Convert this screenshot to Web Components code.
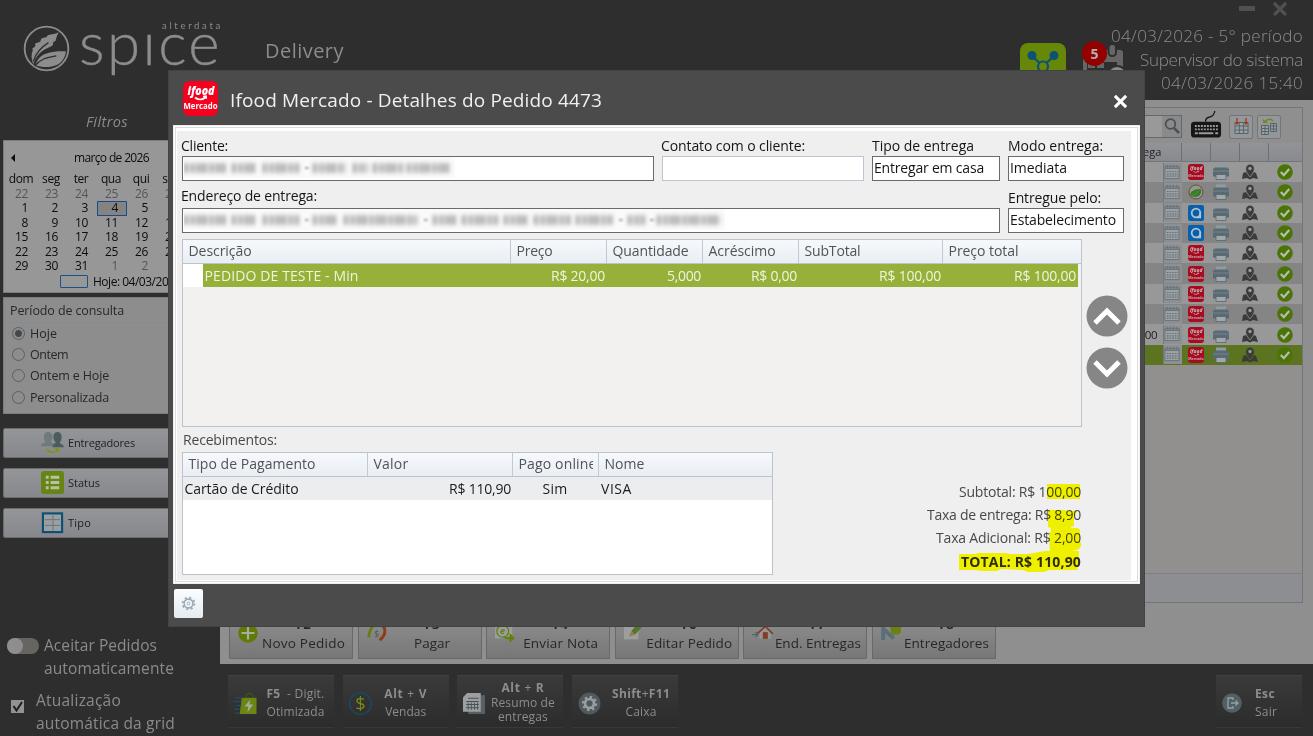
<!DOCTYPE html>
<html lang="pt-BR">
<head>
<meta charset="utf-8">
<title>Spice Delivery</title>
<style>
    html, body{
        margin: 0;
        padding: 0;
        height: 100%;
        overflow: hidden;
        background: #2e2e2e;
        font-family: "Open Sans", "Noto Sans", sans-serif;
    }
</style>
</head>
<body>
<spice-app></spice-app>

<script>
const ICONS = {
    leaf: `<svg viewBox="0 0 48 48"><circle cx="24" cy="24" r="22.3" fill="none" stroke="#8c8c8c" stroke-width="1.9"/>
        <path fill="#8c8c8c" d="M10.500 40C8.500 35 8 30 10 26l-.5-2 3-2 0-3 5-2 1.500-3.500 4.500-1 2-2c4-1 7-1 11-3-2.500 4-2.500 7-3.500 9l-2 .5-.5 3.500c-2 2-4 2.500-6.500 3.500C18 27 13 32 10.500 40z"/>
        <path fill="none" stroke="#2e2e2e" stroke-width="1.300" d="M10.500 37C13 29 18 23 26 18"/>
        <path fill="#8c8c8c" d="M12.500 41c2-7 7-11 13-12.500 6-1.500 12-2 18.500-1.500-1 6-4 11-9 13.500-7 3-15 3-22.500.5z"/>
        <path fill="none" stroke="#2e2e2e" stroke-width="1.300" d="M12 42c5-7 12-9 22-10.500"/></svg>`,
    ifood: `<svg viewBox="0 0 35 35"><rect width="35" height="35" rx="6.5" fill="var(--red, #f5001f)"/>
        <g fill="var(--ink, #fff)" font-family="Open Sans" text-anchor="middle">
        <text x="18" y="13.5" font-size="12.5" font-weight="800" font-style="italic" textLength="27" lengthAdjust="spacingAndGlyphs">ifood</text>
        <text x="17.5" y="28" font-size="8.5" font-weight="700" textLength="34" lengthAdjust="spacingAndGlyphs">Mercado</text></g>
        <path d="M12 16.5q5 4 10.500 0M20 15.500l3-.3.4 2.500" fill="none" stroke="var(--ink, #fff)" stroke-width="1.700"/></svg>`,
    share: `<svg viewBox="0 0 46 46"><rect width="46" height="46" rx="8" fill="#678708"/>
        <g stroke="#0d5273" stroke-width="2.200" fill="none"><path d="M12 13l11 10 11-10M23 23v12"/><circle cx="23" cy="23.500" r="5" fill="#678708"/></g>
        <circle cx="12" cy="12.500" r="4.500" fill="#0d5273"/><circle cx="34" cy="12.500" r="4.500" fill="#0d5273"/></svg>`,
    agenda: `<svg viewBox="0 0 42 42"><rect x="0" y="7" width="40" height="35" rx="3" fill="#666"/>
        <rect x="25.500" y="1" width="7.500" height="12" rx="3.500" fill="#666" stroke="#2e2e2e" stroke-width="2"/>
        <path fill="#2e2e2e" d="M4 19h30v22H4z"/><path fill="#666" d="M5 20h7v5H5zM14 20h7v5h-7z"/>
        <circle cx="34" cy="33" r="10" fill="#8a8a8a" stroke="#2e2e2e" stroke-width="2"/></svg>`,
    users: `<svg viewBox="0 0 24 24"><path fill="#6f7a7d" d="M7 1c3 0 5 2 5 5s-1 4-2 5c1 2 4 2 5 5H0c0-3 3-3 5-5-2-1-2-3-2-5s1-5 4-5z"/>
        <path fill="#4c5b60" d="M17 1c3 0 4.500 2 4.500 5s-1 5-2 6c1 2 4 2 4.500 5H12c0-3 2-4 3.500-5-2-2-2.500-4-2.500-6s1-5 4-5z"/>
        <path d="M6 19c3 4 8 4 11 1" fill="none" stroke="#7d9410" stroke-width="1.500"/><path fill="#7d9410" d="M14 18h5l-1 5z"/></svg>`,
    status: `<svg viewBox="0 0 24 24"><rect width="24" height="24" rx="3" fill="#678514"/><g fill="#b9c2a0"><path d="M5 5h3v3H5zM5 10.500h3v3H5zM5 16h3v3H5zM10 5h9v3h-9zM10 10.500h9v3h-9zM10 16h9v3h-9z"/></g></svg>`,
    tipo: `<svg viewBox="0 0 24 24"><rect x="2" y="2.500" width="20" height="19.500" fill="#9a9fa1" stroke="#0c4f73" stroke-width="2.200"/><path d="M4 9h16M4 15h16M12.500 4v17" stroke="#6c7377" stroke-width="1"/></svg>`,
    search: `<svg viewBox="0 0 18 18"><circle cx="7.500" cy="7" r="4.800" fill="none" stroke="#4a5053" stroke-width="1.800"/><path d="M11 11l5 5" stroke="#4a5053" stroke-width="2.500"/></svg>`,
    keyboard: `<svg viewBox="0 0 32 32"><rect y="12" width="31" height="16.500" rx="3.500" fill="#161616"/>
        <path d="M15 12c0-5 3-4 5-5 3-1 4-2 4.500-6" fill="none" stroke="#161616" stroke-width="1.400"/>
        <path d="M4 16.500h24M4 20h24" stroke="#999" stroke-width="2" stroke-dasharray="2 1.100"/><path d="M4 24h3M8 24h15M25 24h3" stroke="#999" stroke-width="2"/></svg>`,
    gridRed: `<svg viewBox="0 0 18 18"><rect x="3" y="4" width="13" height="12" fill="#9a9fa1"/><path d="M3 4.500h13v11H3zM3 8h13M3 12h13M7.300 4v12M11.600 4v12" stroke="#56656c" fill="none"/><path d="M5 0v5M14 0v5" stroke="#a03818" stroke-width="1.300"/><path fill="#a03818" d="M2.500 4h5L5 7zM11.500 4h5L14 7z"/></svg>`,
    gridGreen: `<svg viewBox="0 0 18 18"><path d="M1.500 7.500h7v9h-7zM1.500 10.500h7M1.500 13.500h7M5 7v9M10.500 5.500h6v8h-6zM10.500 8h6M10.500 11h6M13.500 5v8" stroke="#56656c" fill="#9a9fa1"/><path d="M5 4c3-4 6-3 8-1" stroke="#6c8c10" stroke-width="1.600" fill="none"/><path fill="#6c8c10" d="M3 1l5 4H3z"/></svg>`,
    calendar: `<svg viewBox="0 0 18 18"><path d="M1 3.500h15v13H1z" fill="#9ca1a3" stroke="#66727a"/><path d="M1 5.500h15" stroke="#66727a" stroke-width="1.500"/><path d="M3.500 2v3M6.500 2v3M10 2v3M13.500 2v3" stroke="#66727a"/><path d="M3 9h12M3 11.500h12M3 14h12" stroke="#66727a" stroke-width="1.300" stroke-dasharray="1.800 1"/></svg>`,
    leafRound: `<svg viewBox="0 0 16 16"><circle cx="8" cy="8" r="7" fill="#96998f" stroke="#67502e" stroke-width="1"/><path d="M2 11C3 6 8 5 13 5c1 5-2 8-6 8-2 0-3-1-5-2z" fill="#3d792c"/><path d="M3.500 11.500q5-1 8-5" stroke="#5b8f48" fill="none" stroke-width=".8"/></svg>`,
    aiq: `<svg viewBox="0 0 16 16"><rect width="16" height="16" rx="2" fill="#075fae"/><circle cx="8" cy="8" r="4.300" fill="none" stroke="#b5c2cb" stroke-width="1.700"/><path d="M12.300 7v5.500H9" stroke="#b5c2cb" stroke-width="1.600" fill="none"/></svg>`,
    printer: `<svg viewBox="0 0 16 16"><path d="M3 .5h10V5H3z" fill="#8e9ba1"/><path d="M0 4.500h1.500v-1h13v1H16v8H0z" fill="#596a72"/><path d="M0 7h16" stroke="#75838a"/><path d="M3 10.500h10v5H3z" fill="#a0a8ab" stroke="#55666e" stroke-width=".8"/></svg>`,
    pin: `<svg viewBox="0 0 16 16"><path fill="#3b3b3b" d="M1 9l3-1 4 5 4-5 2 1 2 6-5-1-3 1.500L5 14l-5 1z"/><path fill="#3b3b3b" stroke="var(--halo, #999)" stroke-width=".6" d="M8 13C4 8 3.800 6.500 3.800 4.500a4.200 4.200 0 018.400 0C12.200 6.500 12 8 8 13z"/><circle cx="8" cy="4.500" r="1.700" fill="#999"/></svg>`,
    check: `<svg viewBox="0 0 16 16"><circle cx="8" cy="8" r="7.800" fill="#4b7407"/><path d="M3.800 8l3 3.200L12.200 5" fill="none" stroke="#b9bcb2" stroke-width="2.200"/></svg>`,
    plus: `<svg viewBox="0 0 20 20"><circle cx="10" cy="10" r="9.700" fill="#5f7a06"/><path d="M10 3.500v13M3.500 10h13" stroke="#a9ae9c" stroke-width="2.200"/></svg>`,
    pay: `<svg viewBox="0 0 22 22"><path d="M2 16C2 9 4 4 10 1" fill="none" stroke="#657f0e" stroke-width="3"/><path d="M14 1c7 3 8 11 0 18" fill="none" stroke="#8e3c18" stroke-width="3.200"/><text x="8" y="15" font-size="10" fill="#555">$</text></svg>`,
    note: `<svg viewBox="0 0 22 22"><path fill="#999d9e" d="M0 0h19v17H0z"/><text x="5.500" y="12.500" font-size="10" font-style="italic" font-weight="700" fill="#657f0e">e</text><circle cx="8.500" cy="9" r="6.500" fill="none" stroke="#657f0e" stroke-width="1.300"/><path fill="#657f0e" d="M9 15h7v-4l6 5.500-6 5.500v-4c-3 0-5 0-7-3z"/></svg>`,
    edit: `<svg viewBox="0 0 22 22"><path fill="#9ba09f" d="M0 1h16v17H0z"/><path fill="#53772c" d="M8 9l9-11 5 4-10 11z"/><path fill="#9b784d" d="M8 9l4 4-7 2z"/></svg>`,
    house: `<svg viewBox="0 0 24 20"><path fill="#90979a" d="M9 8l7-6 7 6v9H9z"/><path d="M6 11l10-9 9 9" stroke="#853c25" stroke-width="2" fill="none"/><path fill="#853c25" d="M13 9h6v8h-6z"/><path d="M0 12h6M4 9l3 3-3 3" stroke="#54636a" stroke-width="1.500" fill="none"/></svg>`,
    drivers: `<svg viewBox="0 0 23 20"><path d="M2.500 18V5l12 11" fill="none" stroke="#596e76" stroke-width="4.500"/><rect x="11" y="-4" width="12" height="16" rx="5" fill="#6b8210"/></svg>`,
    bag: `<svg viewBox="0 0 24 24"><path fill="#6d8512" d="M8 6h15.500v17H6z"/><path d="M12 6c0-6 8-6 8 0" stroke="#41521a" stroke-width="1.500" fill="none"/><path fill="#a7aea0" d="M17 8l-6 7h4l-1 6 6-8h-4z"/><path d="M1 6h8M0 10h8M2 14h6M0 18h6M1 22h5" stroke="#1c5574" stroke-width="1"/></svg>`,
    coin: `<svg viewBox="0 0 24 24"><circle cx="12" cy="12" r="11.300" fill="none" stroke="#174d65" stroke-width="1.300"/><text x="12" y="18.500" text-anchor="middle" font-size="19" fill="#788f10">$</text></svg>`,
    report: `<svg viewBox="0 0 22 22"><path fill="#586066" d="M5 3h16v18H5z"/><path fill="#9b9f9f" d="M4 1h13v18H0V5z"/><path d="M5 6h10M3 9h12M3 12h12M3 15h12" stroke="#485055"/><path d="M5 10v7M8 10v7M11 10v7M14 10v7" stroke="#485055" stroke-width=".8"/></svg>`,
    cog: `<svg viewBox="0 0 22 22"><circle cx="11" cy="11" r="10.500" fill="#50595e"/><circle cx="11" cy="11" r="4.300" fill="none" stroke="#9b9f9f" stroke-width="2.600"/><circle cx="11" cy="11" r="6.300" fill="none" stroke="#9b9f9f" stroke-width="2" stroke-dasharray="2.300 2.650"/></svg>`,
    exit: `<svg viewBox="0 0 20 20"><circle cx="10" cy="10" r="9.800" fill="#506066"/><path d="M11 7V5H6v10h5v-2M9 10h7M13.500 7.500L16 10l-2.500 2.500" fill="none" stroke="#9b9f9f" stroke-width="1.300"/></svg>`,
    gear: `<svg viewBox="0 0 16 16"><circle cx="8" cy="8" r="4.700" fill="none" stroke="#9aabb4" stroke-width="1.700"/><circle cx="8" cy="8" r="6.300" fill="none" stroke="#9aabb4" stroke-width="2" stroke-dasharray="2.200 2.750"/><circle cx="8" cy="8" r="1.400" fill="none" stroke="#9aabb4"/></svg>`,
    up: `<svg viewBox="0 0 42 42"><circle cx="21" cy="21" r="20.500" fill="#868686"/><path d="M9 28l12-12 12 12" fill="none" stroke="#fff" stroke-width="5"/></svg>`,
    down: `<svg viewBox="0 0 42 42"><circle cx="21" cy="21" r="20.500" fill="#868686"/><path d="M9 15l12 12 12-12" fill="none" stroke="#fff" stroke-width="5"/></svg>`,
    cross: `<svg viewBox="0 0 16 16"><path d="M2 2l12 12M14 2L2 14" stroke="currentColor" stroke-width="3.200"/></svg>`
};

class AppIcon extends HTMLElement{
    constructor(){
        super();
        this.attachShadow({mode : "open"});
    }
    connectedCallback(){
        this.shadowRoot.innerHTML = `
            <style>
                :host{
                    display: block;
                    flex: none;
                    width: ${this.getAttribute("size")}px;
                    height: ${this.getAttribute("size")}px;
                }
                svg{
                    display: block;
                    width: 100%;
                    height: 100%;
                    overflow: visible;
                }
            </style>
            ${ICONS[this.getAttribute("name")]}
        `;
    }
}
customElements.define("app-icon", AppIcon);

// One line of text, tracked so that it takes exactly the width in the "w" attribute
class UiText extends HTMLElement{
    constructor(){
        super();
        this.attachShadow({mode : "open"});
        this.shadowRoot.innerHTML = `
            <style>
                :host{
                    display: block;
                    flex: none;
                }
                span{
                    display: block;
                    width: max-content;
                    white-space: pre;
                }
            </style>
            <span><slot></slot></span>
        `;
    }
    connectedCallback(){
        const w = parseFloat(this.getAttribute("w"));
        if(!w) return;
        const span = this.shadowRoot.querySelector("span");
        const gap = (w - span.getBoundingClientRect().width) / this.textContent.length;
        span.style.letterSpacing = gap + "px";
    }
}
customElements.define("ui-text", UiText);

class BrandHeader extends HTMLElement{
    constructor(){
        super();
        this.attachShadow({mode : "open"});
        this.shadowRoot.innerHTML = `
            <style>
                :host{
                    display: flex;
                    height: 100px;
                    box-sizing: border-box;
                    color: #8c8c8c;
                }
                .logo{
                    display: flex;
                    padding: 25px 0 0 23px;
                    gap: 11px;
                }
                .name{
                    margin-top: -4px;
                    width: 140px;
                }
                .maker{
                    font: 9.500px/10px "Lato", sans-serif;
                    padding-left: 81px;
                }
                /* the wordmark has no dot on the i, the top edge cuts it */
                .word{
                    font: 300 60px/74px "Lato", sans-serif;
                    height: 46px;
                    overflow: hidden;
                    margin-top: 1px;
                    -webkit-text-stroke: .4px #8c8c8c;
                }
                .word ui-text{
                    margin-top: -27px;
                    margin-left: -2px;
                }
                .page{
                    font-size: 20px;
                    line-height: 26px;
                    margin: 38px 0 0 44px;
                }
                .right{
                    margin-left: auto;
                    display: flex;
                }
                .share{
                    margin-top: 43px;
                }
                .agenda{
                    margin: 43px 0 0 17px;
                    position: relative;
                }
                .badge{
                    position: absolute;
                    left: -1px;
                    top: -2px;
                    width: 25px;
                    height: 25px;
                    border-radius: 50%;
                    background: #930000;
                    color: #b9b0b0;
                    font: bold 14px/25px "Open Sans", sans-serif;
                    text-align: center;
                }
                .session{
                    width: 194px;
                    margin: 1px 10px 0 -16px;
                    display: flex;
                    flex-direction: column;
                    align-items: flex-end;
                    font: 300 17px/23.500px "Open Sans", sans-serif;
                    white-space: nowrap;
                }
                .window{
                    display: flex;
                    align-items: center;
                    gap: 17px;
                    height: 15px;
                    margin: 0 15px 8px 0;
                    color: #505050;
                }
                .min{
                    width: 16px;
                    height: 5px;
                    background: #505050;
                }
            </style>
            <div class="logo">
                <app-icon name="leaf" size="47"></app-icon>
                <div class="name">
                    <div class="maker"><ui-text w="61">alterdata</ui-text></div>
                    <div class="word"><ui-text w="143">spice</ui-text></div>
                </div>
            </div>
            <div class="page"><ui-text w="79">Delivery</ui-text></div>
            <div class="right">
                <app-icon class="share" name="share" size="46"></app-icon>
                <div class="agenda"><app-icon name="agenda" size="42"></app-icon><div class="badge">5</div></div>
                <div class="session">
                    <div class="window"><div class="min"></div><app-icon name="cross" size="16"></app-icon></div>
                    <ui-text w="192">04/03/2026 - 5° período</ui-text>
                    <ui-text w="163">Supervisor do sistema</ui-text>
                    <ui-text w="142">04/03/2026 15:40</ui-text>
                </div>
            </div>
        `;
    }
}
customElements.define("brand-header", BrandHeader);

class MonthCalendar extends HTMLElement{
    constructor(){
        super();
        this.attachShadow({mode : "open"});
        const days = [22,23,24,25,26,27, 1,2,3,4,5,6, 8,9,10,11,12,13, 15,16,17,18,19,20, 22,23,24,25,26,27, 29,30,31,1,2,3];
        const cells = days.map((d, i) => {
            const other = i < 6 || i > 32;
            return `<span class="${other ? "other" : ""} ${i == 9 ? "today" : ""}">${d}</span>`;
        }).join("");
        this.shadowRoot.innerHTML = `
            <style>
                :host{
                    display: block;
                    flex: none;
                    height: 153px;
                    box-sizing: border-box;
                    background: #979797;
                    border: 1px solid #7c7c7c;
                    color: #0c0c0c;
                    font-size: 12px;
                    overflow: hidden;
                }
                .top{
                    display: flex;
                    align-items: center;
                    height: 32px;
                    padding: 1px 0 0 7px;
                    box-sizing: border-box;
                }
                .arrow{
                    border: 4px solid transparent;
                    border-right-color: #0c0c0c;
                    border-left: 0;
                    margin-right: 59px;
                }
                .days{
                    display: grid;
                    grid-template-columns: repeat(6, 30px);
                    padding-left: 3px;
                    letter-spacing: -.4px;
                }
                .names{
                    line-height: 11px;
                    height: 14px;
                    text-align: center;
                    margin-left: -1px;
                }
                .nums{
                    line-height: 14.450px;
                    text-align: right;
                }
                .nums span{
                    padding-right: 9px;
                    height: 14.450px;
                }
                .other{
                    color: #555;
                }
                .nums .today{
                    background: #848484;
                    box-shadow: inset 0 0 0 1px #174d80;
                    border-radius: 1px;
                }
                .foot{
                    display: flex;
                    align-items: center;
                    gap: 5px;
                    padding-left: 56px;
                    height: 16px;
                }
                .box{
                    width: 26px;
                    height: 11px;
                    border: 1px solid #1b5286;
                    border-radius: 1px;
                }
            </style>
            <div class="top"><div class="arrow"></div><ui-text w="75">março de 2026</ui-text></div>
            <div class="days names"><span>dom</span><span>seg</span><span>ter</span><span>qua</span><span>qui</span><span>sex</span></div>
            <div class="days nums">${cells}</div>
            <div class="foot"><div class="box"></div><ui-text w="88">Hoje: 04/03/2026</ui-text></div>
        `;
    }
}
customElements.define("month-calendar", MonthCalendar);

class PeriodFilter extends HTMLElement{
    constructor(){
        super();
        this.attachShadow({mode : "open"});
        this.shadowRoot.innerHTML = `
            <style>
                :host{
                    display: block;
                    flex: none;
                    height: 117px;
                    box-sizing: border-box;
                    background: #8d8d8d;
                    border: 1px solid #7c7c7c;
                    color: #282828;
                    font-size: 12.500px;
                }
                .title{
                    line-height: 25px;
                    height: 24px;
                    padding-left: 6px;
                    border-bottom: 1px solid #868c8c;
                }
                label{
                    display: flex;
                    align-items: center;
                    height: 21.200px;
                    padding-left: 8px;
                    gap: 5px;
                }
                i{
                    width: 11px;
                    height: 11px;
                    border: 1px solid #595e66;
                    border-radius: 50%;
                }
                .on{
                    background: radial-gradient(#44484d 3px, transparent 4px);
                }
            </style>
            <div class="title"><ui-text w="114">Período de consulta</ui-text></div>
            <label><i class="on"></i><ui-text w="27">Hoje</ui-text></label>
            <label><i></i><ui-text w="38">Ontem</ui-text></label>
            <label><i></i><ui-text w="79">Ontem e Hoje</ui-text></label>
            <label><i></i><ui-text w="79">Personalizada</ui-text></label>
        `;
    }
}
customElements.define("period-filter", PeriodFilter);

class SideButton extends HTMLElement{
    constructor(){
        super();
        this.attachShadow({mode : "open"});
        this.shadowRoot.innerHTML = `
            <style>
                :host{
                    display: flex;
                    align-items: center;
                    gap: 4px;
                    height: 30px;
                    box-sizing: border-box;
                    padding: 0 0 2px 37px;
                    background: linear-gradient(#939598, #85878a);
                    border: 1px solid #6d6d6d;
                    border-radius: 2px;
                    color: #1e1e1e;
                    font-size: 11px;
                }
            </style>
            <app-icon name="${this.getAttribute("icon")}" size="23"></app-icon>
            <slot></slot>
        `;
    }
}
customElements.define("side-button", SideButton);

class FilterSidebar extends HTMLElement{
    constructor(){
        super();
        this.attachShadow({mode : "open"});
        this.shadowRoot.innerHTML = `
            <style>
                :host{
                    display: flex;
                    flex-direction: column;
                    box-sizing: border-box;
                    padding: 0 0 0 3px;
                    width: 220px;
                    flex: none;
                }
                .title{
                    height: 40px;
                    padding: 11px 0 0 83px;
                    box-sizing: border-box;
                    font: italic 14.500px/21px "Open Sans", sans-serif;
                    color: #8c8c8c;
                }
                month-calendar, period-filter, .buttons{
                    width: 180px;
                }
                period-filter{
                    margin-top: 4px;
                }
                .buttons{
                    display: flex;
                    flex-direction: column;
                    gap: 10px;
                    margin-top: 14px;
                }
                .opt{
                    display: flex;
                    color: #8b8b8b;
                    font-size: 15.500px;
                    line-height: 22.500px;
                }
                .accept{
                    margin-top: 96px;
                    padding-left: 4px;
                    gap: 5px;
                }
                .switch{
                    width: 32px;
                    height: 16px;
                    border-radius: 8px;
                    background: #676562;
                    margin-top: 4px;
                }
                .knob{
                    width: 16px;
                    height: 16px;
                    border-radius: 50%;
                    background: #8e8e8e;
                }
                .auto{
                    margin-top: 10px;
                    padding-left: 8px;
                    gap: 12px;
                }
                .box{
                    width: 13px;
                    height: 13px;
                    margin-top: 11px;
                    background: #929292;
                }
                .box svg{
                    display: block;
                }
            </style>
            <div class="title"><ui-text w="42">Filtros</ui-text></div>
            <month-calendar></month-calendar>
            <period-filter></period-filter>
            <div class="buttons">
                <side-button icon="users"><ui-text w="67">Entregadores</ui-text></side-button>
                <side-button icon="status"><ui-text w="32">Status</ui-text></side-button>
                <side-button icon="tipo"><ui-text w="23">Tipo</ui-text></side-button>
            </div>
            <div class="opt accept">
                <div class="switch"><div class="knob"></div></div>
                <div><ui-text w="113">Aceitar Pedidos</ui-text><ui-text w="130">automaticamente</ui-text></div>
            </div>
            <div class="opt auto">
                <div class="box"><svg width="13" height="13"><path d="M2.500 6l3 4.500 5.500-8.500" fill="none" stroke="#1d1d1d" stroke-width="2"/></svg></div>
                <div><ui-text w="85">Atualização</ui-text><ui-text w="139">automática da grid</ui-text></div>
            </div>
        `;
    }
}
customElements.define("filter-sidebar", FilterSidebar);

class OrdersPanel extends HTMLElement{
    constructor(){
        super();
        this.attachShadow({mode : "open"});
        const sources = ["ifood", "leafRound", "aiq", "aiq", "ifood", "ifood", "ifood", "ifood", "ifood", "ifood"];
        const rows = sources.map((s, i) => `
            <div class="row ${i == 9 ? "sel" : ""}">
                <span>${i == 8 ? ":00" : ""}</span>
                <div class="cal"><app-icon name="calendar" size="17"></app-icon></div>
                <app-icon name="${s}" size="16"></app-icon>
                <app-icon class="near" name="printer" size="16"></app-icon>
                <app-icon class="near" name="pin" size="16"></app-icon>
                <app-icon name="check" size="16"></app-icon>
            </div>`).join("");
        const keys = [
            ["plus", "F2", "Novo Pedido", 83], ["pay", "F3", "Pagar", 36], ["note", "F4", "Enviar Nota", 75],
            ["edit", "F6", "Editar Pedido", 86], ["house", "F7", "End. Entregas", 86], ["drivers", "F8", "Entregadores", 85]
        ];
        this.shadowRoot.innerHTML = `
            <style>
                :host{
                    display: flex;
                    flex-direction: column;
                    box-sizing: border-box;
                    flex: 1;
                    background: #8f8f8f;
                    padding: 7px 10px 5px 8px;
                }
                .sheet{
                    height: 496px;
                    box-sizing: border-box;
                    border: 1px solid #737679;
                    display: flex;
                    flex-direction: column;
                    background: #92908e;
                }
                .tools{
                    display: flex;
                    justify-content: flex-end;
                    height: 35px;
                    box-sizing: border-box;
                    padding: 3px 21px 0 0;
                    background: #8f8f8f;
                }
                .find{
                    width: 120px;
                    height: 21px;
                    margin: 4px 9px 0 0;
                    border: 1px solid #63686e;
                    background: #999;
                    display: flex;
                    justify-content: flex-end;
                }
                .find div{
                    background: #8a8a8a;
                    padding: 1px 0 0 1px;
                }
                .tool{
                    width: 22px;
                    height: 22px;
                    border: 1px solid #74777a;
                    border-radius: 2px;
                    background: #949699;
                    margin-top: 4px;
                    display: flex;
                    align-items: center;
                    justify-content: center;
                }
                .kb{
                    margin: -1px 7px 0 0;
                }
                .tool + .tool{
                    margin-left: 4px;
                }
                .head, .row{
                    display: grid;
                    grid-template-columns: 20px 18px 29px 29px 29px 34px;
                    justify-content: end;
                    align-items: center;
                    font-size: 11.500px;
                    color: #202020;
                }
                .head{
                    height: 19px;
                    box-sizing: border-box;
                    background: linear-gradient(#919396, #888a8e);
                    border-bottom: 1px solid #72767a;
                    grid-template-columns: 38px 29px 29px 29px 34px;
                    font-size: 11px;
                }
                .head span{
                    height: 18px;
                    line-height: 18px;
                }
                .head span + span{
                    border-left: 1px solid #6c7074;
                }
                .row{
                    height: 20.300px;
                    background: #989898;
                    --red: #a60b20;
                    --ink: #c2aeb1;
                    justify-items: center;
                }
                .row span{
                    justify-self: start;
                    margin-left: -1px;
                    letter-spacing: -.3px;
                }
                .row .near{
                    justify-self: start;
                    margin-left: 3px;
                }
                .row:nth-child(even){
                    background: #858585;
                }
                .row.sel{
                    background: #5c731f;
                    --halo: #5c731f;
                }
                .cal{
                    width: 18px;
                    height: 19px;
                    background: #8e9193;
                    border-left: 1px solid #74797d;
                }
                .foot{
                    margin-top: auto;
                    height: 28px;
                    border-top: 1px solid #7e8083;
                    background: #8c8e91;
                }
                .keys{
                    display: flex;
                    gap: 4.600px;
                    margin: auto 0 0 1px;
                }
                .key{
                    width: 124px;
                    height: 50px;
                    box-sizing: border-box;
                    border: 1px solid #696969;
                    background: linear-gradient(#929292, #777);
                    display: flex;
                    align-items: flex-end;
                    padding: 0 5px 5px 8px;
                    color: #272727;
                    font-size: 13.500px;
                }
                .key app-icon{
                    margin-bottom: 10px;
                }
                .key div{
                    flex: 1;
                    display: flex;
                    flex-direction: column;
                    align-items: center;
                    line-height: 20px;
                    margin-left: 2px;
                }
                .key b{
                    line-height: 16px;
                    font-size: 13px;
                    padding-bottom: 1px;
                }
            </style>
            <div class="sheet">
                <div class="tools">
                    <div class="find"><div><app-icon name="search" size="18"></app-icon></div></div>
                    <app-icon class="kb" name="keyboard" size="31"></app-icon>
                    <div class="tool"><app-icon name="gridRed" size="18"></app-icon></div>
                    <div class="tool"><app-icon name="gridGreen" size="18"></app-icon></div>
                </div>
                <div class="head"><span>ega</span><span></span><span></span><span></span><span></span></div>
                <div>${rows}</div>
                <div class="foot"></div>
            </div>
            <div class="keys">
                ${keys.map(([icon, key, name, w]) => `<div class="key"><app-icon name="${icon}" size="20"></app-icon><div><b>${key}</b><ui-text w="${w}">${name}</ui-text></div></div>`).join("")}
            </div>
        `;
    }
}
customElements.define("orders-panel", OrdersPanel);

class ActionTile extends HTMLElement{
    constructor(){
        super();
        this.attachShadow({mode : "open"});
        this.shadowRoot.innerHTML = `
            <style>
                :host{
                    display: flex;
                    align-items: center;
                    width: 106px;
                    height: 53px;
                    box-sizing: border-box;
                    padding: 3px var(--right, 0) 0 6px;
                    background: linear-gradient(#3a3a3a, #2c2c2c);
                    border-top: 1px solid #414141;
                    border-bottom: 1px solid #383838;
                    color: #8d8d8d;
                    font-size: 12px;
                }
                .label{
                    flex: 1;
                    display: flex;
                    flex-direction: column;
                    align-items: center;
                    line-height: var(--line, 18.500px);
                }
            </style>
            <app-icon name="${this.getAttribute("icon")}" size="${this.getAttribute("size") || 23}"></app-icon>
            <div class="label"><slot></slot></div>
        `;
    }
}
customElements.define("action-tile", ActionTile);

class ActionBar extends HTMLElement{
    constructor(){
        super();
        this.attachShadow({mode : "open"});
        this.shadowRoot.innerHTML = `
            <style>
                :host{
                    display: flex;
                    gap: 8.700px;
                    height: 72px;
                    box-sizing: border-box;
                    padding: 11px 11px 0 8px;
                }
                .coin{
                    --right: 9px;
                }
                .tight{
                    --line: 14.500px;
                    --right: 4px;
                }
                .exit{
                    margin-left: auto;
                    width: 86px;
                }
                .exit ui-text{
                    align-self: flex-start;
                    margin-left: 13px;
                }
                .cash ui-text{
                    margin-left: 3px;
                }
            </style>
            <action-tile icon="bag"><ui-text w="58"><b>F5</b>  - Digit.</ui-text><ui-text w="58">Otimizada</ui-text></action-tile>
            <action-tile class="coin" icon="coin"><ui-text w="43"><b>Alt</b> + <b>V</b></ui-text><ui-text w="41">Vendas</ui-text></action-tile>
            <action-tile class="tight" icon="report"><ui-text w="43"><b>Alt</b> + <b>R</b></ui-text><ui-text w="64">Resumo de</ui-text><ui-text w="50">entregas</ui-text></action-tile>
            <action-tile class="cash" icon="cog"><ui-text w="58"><b>Shift</b>+<b>F11</b></ui-text><ui-text w="31">Caixa</ui-text></action-tile>
            <action-tile class="exit" icon="exit" size="20"><ui-text w="20"><b>Esc</b></ui-text><ui-text w="22">Sair</ui-text></action-tile>
        `;
    }
}
customElements.define("action-bar", ActionBar);

class FormField extends HTMLElement{
    constructor(){
        super();
        this.attachShadow({mode : "open"});
        this.shadowRoot.innerHTML = `
            <style>
                :host{
                    display: flex;
                    flex-direction: column;
                    justify-content: flex-end;
                    flex: none;
                    width: ${this.getAttribute("width")}px;
                    color: #151515;
                    font-size: 14px;
                }
                .label{
                    line-height: 20px;
                    height: var(--label-height, 20px);
                    margin-left: var(--label-shift, -1px);
                }
                .box{
                    height: 25px;
                    line-height: 22px;
                    box-sizing: border-box;
                    border: 1px solid var(--edge, #6a6a6a);
                    background: #fff;
                    padding-left: 1px;
                    overflow: hidden;
                }
            </style>
            <div class="label"><ui-text w="${this.getAttribute("label-width")}">${this.getAttribute("label")}</ui-text></div>
            <div class="box"><slot></slot></div>
        `;
    }
}
customElements.define("form-field", FormField);

// Personal data is never shown: each word becomes a smudge. "words" holds start:width pairs
class MaskedText extends HTMLElement{
    constructor(){
        super();
        this.attachShadow({mode : "open"});
        let at = 0;
        const words = this.getAttribute("words").split(" ").map(p => {
            const [x, w] = p.split(":").map(Number);
            const gap = x - at;
            at = x + w;
            return `<i class="${w < 6 ? "dash" : ""}" style="margin-left:${gap}px;width:${w}px"></i>`;
        }).join("");
        this.shadowRoot.innerHTML = `
            <style>
                :host{
                    display: flex;
                    align-items: center;
                    height: 21px;
                    width: ${at + 4}px;
                    background: #fafafa;
                    overflow: hidden;
                }
                i{
                    flex: none;
                    height: 10px;
                    background: repeating-linear-gradient(90deg, #666 0 3px, #eee 4px 6px, #777 7px 9px, #bbb 10px 14px, #555 15px 16px, #eee 18px 19px);
                    opacity: .6;
                    filter: blur(2px);
                }
                .dash{
                    height: 2px;
                    filter: blur(1px);
                }
            </style>
            ${words}
        `;
    }
}
customElements.define("masked-text", MaskedText);

// cols: [title, width, text width], cells: [value, text width, align]
class DetailGrid extends HTMLElement{
    constructor(){
        super();
        this.attachShadow({mode : "open"});
        const cols = JSON.parse(this.getAttribute("cols"));
        const cells = JSON.parse(this.getAttribute("cells"));
        this.shadowRoot.innerHTML = `
            <style>
                :host{
                    display: block;
                    box-sizing: border-box;
                    border: 1px solid #bcc3cc;
                    background: var(--empty, #fff);
                    font-size: 14px;
                }
                .line{
                    display: grid;
                    grid-template-columns: ${cols.map(c => c[1] + "px").join(" ")};
                }
                .head{
                    height: 23px;
                    line-height: 22px;
                    background: linear-gradient(#f6f9fc, #e9eef3);
                    border-bottom: 1px solid #bcc3cc;
                    color: #505357;
                }
                .head div{
                    box-sizing: border-box;
                    height: 23px;
                    padding-left: 5.500px;
                    margin-right: 5px;
                    overflow: hidden;
                }
                .head section{
                    border-right: 1px solid #c3c9d0;
                }
                .head section:last-child{
                    border: 0;
                }
                .row{
                    height: 23px;
                    line-height: 24px;
                    background: var(--row, #ebedef);
                    color: var(--row-ink, #1c1c1c);
                    margin-right: var(--row-end, 0);
                    box-shadow: inset var(--indent, 0) 0 #fff;
                }
                .row div{
                    display: flex;
                    justify-content: flex-end;
                    padding-right: 2px;
                }
                .row .left{
                    justify-content: flex-start;
                    padding-left: 2px;
                }
                .row .center{
                    justify-content: center;
                }
                .row div:first-child{
                    padding-left: calc(1.500px + var(--indent, 0px));
                }
            </style>
            <div class="line head">${cols.map(([t, , w]) => `<section><div><ui-text w="${w}">${t}</ui-text></div></section>`).join("")}</div>
            <div class="line row">${cells.map(([t, w, a]) => `<div class="${a || ""}"><ui-text w="${w}">${t}</ui-text></div>`).join("")}</div>
        `;
    }
}
customElements.define("detail-grid", DetailGrid);

class OrderTotals extends HTMLElement{
    constructor(){
        super();
        this.attachShadow({mode : "open"});
        this.shadowRoot.innerHTML = `
            <style>
                :host{
                    display: flex;
                    flex-direction: column;
                    align-items: flex-end;
                    width: 170px;
                    position: relative;
                    color: #484848;
                    font-size: 14px;
                    line-height: 23.200px;
                }
                /* marker strokes lie over the figures */
                svg{
                    position: absolute;
                    left: 0;
                    top: 0;
                    mix-blend-mode: multiply;
                }
                .total{
                    font-weight: bold;
                    color: #2d2d2d;
                }
            </style>
            <ui-text w="122">Subtotal: R$ 100,00</ui-text>
            <ui-text w="154">Taxa de entrega: R$ 8,90</ui-text>
            <ui-text w="145">Taxa Adicional: R$ 2,00</ui-text>
            <ui-text class="total" w="120">TOTAL: R$ 110,90</ui-text>
            <svg width="172" height="96" fill="#ffff00">
                <path d="M136 4h33v15h-33z"/>
                <path d="M137 30h18v1h11l-3 6v9l-3 1v1h6q3 0 3 4v10l1 1v3q-1 4-9 5l-8 1v2h-14l-1-20 2-3v-3l-3-1z"/>
                <path d="M48 74h16l4-1h27l4 1h18l17-3h34v3l-1 7v6l-1 3h-28l-5 2h-16l-5-2-22-1-4 2h-16l-5-1H48z"/>
            </svg>
        `;
    }
}
customElements.define("order-totals", OrderTotals);

class OrderDialog extends HTMLElement{
    constructor(){
        super();
        this.attachShadow({mode : "open"});
        this.shadowRoot.innerHTML = `
            <style>
                :host{
                    display: flex;
                    flex-direction: column;
                    position: absolute;
                    left: 168px;
                    top: 70px;
                    width: 977px;
                    height: 557px;
                    box-sizing: border-box;
                    background: #4b4b4b;
                    border: 1px solid #434343;
                    padding: 0 4px;
                }
                header{
                    display: flex;
                    align-items: center;
                    height: 54px;
                    padding: 0 12px 0 10px;
                    color: #f0f0f0;
                    font-size: 19px;
                }
                header ui-text{
                    margin: 3px auto 0 12px;
                }
                header app-icon:last-child{
                    margin-top: 7px;
                    color: #fff;
                }
                .frame{
                    height: 459px;
                    box-sizing: border-box;
                    border: 1px solid #eee;
                    outline: 1px solid #dcdcdc;
                    outline-offset: -3px;
                    background: #fff;
                    padding: 5px 8px 3px 3px;
                }
                .body{
                    height: 449px;
                    box-sizing: border-box;
                    background: #efefef;
                    padding: 5px 0 0 5px;
                }
                .fields{
                    display: flex;
                    align-items: flex-end;
                    gap: 8px;
                    height: 45px;
                }
                .second{
                    height: 52px;
                }
                .empty{
                    --edge: #bcc5d0;
                }
                .kind{
                    --label-shift: 0;
                }
                .address{
                    --label-height: 22px;
                }
                .middle{
                    display: flex;
                    margin-top: 6px;
                    gap: 4px;
                }
                .items{
                    width: 900px;
                    height: 188px;
                    --empty: #f2f1f0;
                    --row: #95b13a;
                    --row-ink: #f0f3df;
                    --row-end: 3px;
                    --indent: 20px;
                }
                .scroll{
                    padding-top: 56px;
                    display: flex;
                    flex-direction: column;
                    gap: 10px;
                }
                .caption{
                    color: #484848;
                    font-size: 14px;
                    line-height: 25px;
                    padding-left: 1px;
                }
                .bottom{
                    display: flex;
                }
                .payments{
                    width: 591px;
                    height: 123px;
                }
                order-totals{
                    margin: 28px 0 0 138px;
                }
                .gear{
                    width: 29px;
                    height: 29px;
                    margin: 5px 0 0 1px;
                    border-radius: 2px;
                    background: linear-gradient(#fbfdff, #e6ebf0);
                    display: flex;
                    align-items: center;
                    justify-content: center;
                }
            </style>
            <header>
                <app-icon name="ifood" size="35"></app-icon>
                <ui-text w="372">Ifood Mercado - Detalhes do Pedido 4473</ui-text>
                <app-icon name="cross" size="15"></app-icon>
            </header>
            <div class="frame"><div class="body">
                <div class="fields">
                    <form-field width="472" label="Cliente:" label-width="47"><masked-text words="0:42 48:24 79:36 121:4 129:33 169:15 189:31 223:44"></masked-text></form-field>
                    <form-field class="empty" width="202" label="Contato com o cliente:" label-width="144"></form-field>
                    <form-field class="kind" width="128" label="Tipo de entrega" label-width="102"><ui-text w="110">Entregar em casa</ui-text></form-field>
                    <form-field class="kind" width="116" label="Modo entrega:" label-width="95"><ui-text w="57">Imediata</ui-text></form-field>
                </div>
                <div class="fields second">
                    <form-field class="address" width="818" label="Endereço de entrega:" label-width="136"><masked-text words="0:42 48:24 79:36 121:4 129:25 160:73 240:4 249:24 278:36 320:25 350:37 392:37 435:4 444:17 466:4 473:64"></masked-text></form-field>
                    <form-field class="kind" width="116" label="Entregue pelo:" label-width="93"><ui-text w="106">Estabelecimento</ui-text></form-field>
                </div>
                <div class="middle">
                    <detail-grid class="items"
                        cols='[["Descrição",328,63],["Preço",96,36],["Quantidade",96,76],["Acréscimo",96,67],["SubTotal",144,56],["Preço total",135,70]]'
                        cells='[["PEDIDO DE TESTE - Min",154,"left"],["R$ 20,00",54],["5,000",34],["R$ 0,00",46],["R$ 100,00",62],["R$ 100,00",62]]'></detail-grid>
                    <div class="scroll">
                        <app-icon name="up" size="42"></app-icon>
                        <app-icon name="down" size="42"></app-icon>
                    </div>
                </div>
                <div class="caption"><ui-text w="94">Recebimentos:</ui-text></div>
                <div class="bottom">
                    <detail-grid class="payments"
                        cols='[["Tipo de Pagamento",185,127],["Valor",145,35],["Pago online",86,78],["Nome",173,40]]'
                        cells='[["Cartão de Crédito",114,"left"],["R$ 110,90",62],["Sim",25,"center"],["VISA",31,"left"]]'></detail-grid>
                    <order-totals></order-totals>
                </div>
            </div></div>
            <div class="gear"><app-icon name="gear" size="15"></app-icon></div>
        `;
    }
}
customElements.define("order-dialog", OrderDialog);

class SpiceApp extends HTMLElement{
    constructor(){
        super();
        this.attachShadow({mode : "open"});
        this.shadowRoot.innerHTML = `
            <style>
                :host{
                    display: block;
                    position: relative;
                    width: 1313px;
                    height: 736px;
                    overflow: hidden;
                    background: #2e2e2e;
                }
                .main{
                    display: flex;
                    height: 636px;
                }
                .work{
                    flex: 1;
                    display: flex;
                    flex-direction: column;
                }
            </style>
            <brand-header></brand-header>
            <div class="main">
                <filter-sidebar></filter-sidebar>
                <div class="work">
                    <orders-panel></orders-panel>
                    <action-bar></action-bar>
                </div>
            </div>
            <order-dialog></order-dialog>
        `;
    }
}
customElements.define("spice-app", SpiceApp);
</script>
</body>
</html>
